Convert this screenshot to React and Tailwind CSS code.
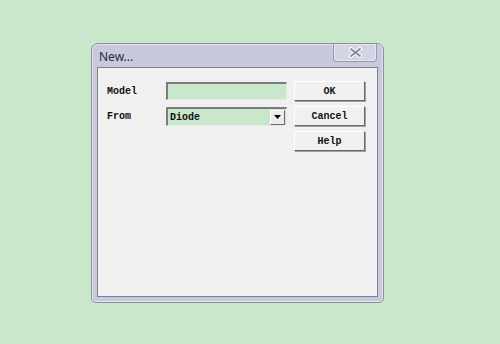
export default function App() {
  const mono = { fontFamily: '"Liberation Mono", "DejaVu Sans Mono", monospace' };
  return (
    <div className="w-[500px] h-[344px] bg-[#c9e7cb] pl-[91px] pt-[43px]">
      <div className="w-[293px] h-[260px] rounded-t-[7px] rounded-b-[5px] border border-[#8c8e9c] bg-[#c6cadc] flex flex-col px-[5px] pb-[5px] shadow-[inset_0_0_0_1px_#e2e4ee]">
        <div className="h-[23px] flex items-start justify-between">
          <div className="pt-[6px] pl-[2px] text-[12px] leading-[14px] text-[#2a2a35]" style={{ fontFamily: '"Noto Sans", "Open Sans", sans-serif' }}>New...</div>
          <div className="mr-[1px] w-[44px] h-[18px] rounded-b-[4px] border border-t-0 border-[#9a9cab] bg-[#d2d5e3] shadow-[inset_0_0_0_1px_#e4e6ef] flex items-center justify-center">
            <svg width="13" height="11" viewBox="0 0 13 11">
              <path d="M2 2 L11 9 M11 2 L2 9" stroke="#ffffff" strokeWidth="4" strokeLinecap="round" />
              <path d="M2 2 L11 9 M11 2 L2 9" stroke="#85889a" strokeWidth="2" strokeLinecap="round" />
            </svg>
          </div>
        </div>
        <div className="flex-1 border border-[#7f8190] bg-[#f0f0f0] flex pt-[13px] pl-[9px]">
          <div className="mt-[1px] flex flex-col gap-[7px]">
            <div className="flex items-center h-[18px]">
              <div className="w-[59px] text-[10px] font-bold text-[#111]" style={mono}>Model</div>
              <div className="w-[121px] h-[18px] border-t-2 border-l-2 border-b border-r border-t-[#7c7c7c] border-l-[#7c7c7c] border-b-[#e8e8e8] border-r-[#e8e8e8] bg-[#c9e7cb]" />
            </div>
            <div className="flex items-center h-[19px]">
              <div className="w-[59px] text-[10px] font-bold text-[#111]" style={mono}>From</div>
              <div className="w-[121px] h-[19px] border-t-2 border-l-2 border-b border-r border-t-[#7c7c7c] border-l-[#7c7c7c] border-b-[#e8e8e8] border-r-[#e8e8e8] bg-[#c9e7cb] flex items-center">
                <div className="flex-1 pl-[2px] text-[10px] font-bold text-[#111]" style={mono}>Diode</div>
                <div className="w-[15px] h-[15px] mr-[1px] bg-[#ececec] border-b border-r border-b-[#6a6a6a] border-r-[#6a6a6a] border-t border-l border-t-white border-l-white flex items-center justify-center">
                  <svg width="7" height="4" viewBox="0 0 7 4"><path d="M0 0 L7 0 L3.5 4 Z" fill="#000" /></svg>
                </div>
              </div>
            </div>
          </div>
          <div className="ml-[7px] flex flex-col gap-[5px]">
            {["OK", "Cancel", "Help"].map((t) => (
              <div key={t} className="w-[71px] h-[20px] bg-[#f0f0f0] border border-t-white border-l-white border-b-[#6a6a6a] border-r-[#6a6a6a] shadow-[1px_1px_0_#a0a0a0] flex items-center justify-center text-[10px] font-bold text-[#111]" style={mono}>
                {t}
              </div>
            ))}
          </div>
        </div>
      </div>
    </div>
  );
}
